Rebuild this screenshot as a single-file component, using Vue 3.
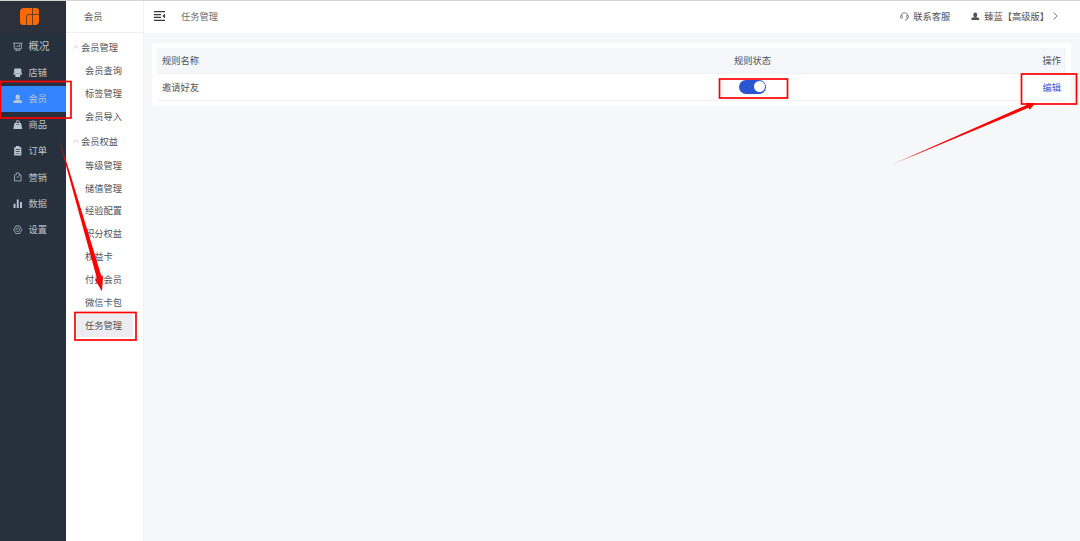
<template>
  <div class="layout">
    <!-- 主导航 -->
    <aside class="main-nav">
      <div class="logo">
        <svg viewBox="0 0 19 17" class="logo-icon">
          <path d="M4 0h12a3 3 0 0 1 3 3v10a4 4 0 0 1-4 4H3a3 3 0 0 1-3-3V4a4 4 0 0 1 4-4z" />
          <path d="M6.5 17V9A2.5 2.5 0 0 1 9 6.500h10M12.500 0v17" class="logo-line" />
        </svg>
      </div>
      <div
        v-for="item in mainMenus"
        :key="item.name"
        :class="['nav-item', { active: item.name === '会员', first: item.name === '概况' }]"
      >
        <svg viewBox="0 0 16 16" class="nav-icon">
          <path :d="item.icon" :class="item.line ? 'line' : 'fill'" fill-rule="evenodd" />
        </svg>
        <span>{{ item.name }}</span>
      </div>
    </aside>

    <!-- 二级菜单 -->
    <aside class="sub-nav">
      <div class="sub-title">会员</div>
      <div v-for="group in subMenus" :key="group.title" class="sub-group">
        <div class="group-title">
          <svg viewBox="0 0 6 4" class="group-arrow"><path d="M.4 3.5L3 .8l2.6 2.7" /></svg>
          <span>{{ group.title }}</span>
        </div>
        <div
          v-for="name in group.items"
          :key="name"
          :class="['sub-item', { active: name === current }]"
        >
          {{ name }}
        </div>
      </div>
    </aside>

    <div class="main">
      <header class="header">
        <svg viewBox="0 0 12 10" class="fold-icon">
          <path d="M0 .7h11M0 3.6h7M0 6.4h7M0 9.3h11" />
          <path d="M11 2.7v4.6L8.3 5z" class="fold-arrow" />
        </svg>
        <span class="page-name">{{ current }}</span>
        <div class="service">
          <svg viewBox="0 0 10 10" class="service-icon">
            <path d="M1.5 4.3a3.5 3.5 0 0 1 7 0M2.4 4H1.2a.7.7 0 0 0-.7.7v1.4a.7.7 0 0 0 .7.7h1.2zM7.6 4h1.2a.7.7 0 0 1 .7.7v1.4a.7.7 0 0 1-.7.7H7.6zM8.6 6.8q0 2-2.9 2.2" />
          </svg>
          <span>联系客服</span>
        </div>
        <div class="user">
          <svg viewBox="0 0 16 16" class="user-icon"><path :d="userIcon" /></svg>
          <span>臻蓝【高级版】</span>
          <svg viewBox="0 0 5 8" class="more-icon"><path d="M.7.6L4.2 4 .7 7.4" /></svg>
        </div>
      </header>

      <section class="card">
        <div class="table-row table-head">
          <span>规则名称</span>
          <span class="center">规则状态</span>
          <span class="right">操作</span>
        </div>
        <div v-for="rule in rules" :key="rule.name" class="table-row">
          <span>{{ rule.name }}</span>
          <span class="center">
            <button :class="['switch', { on: rule.enabled }]" @click="rule.enabled = !rule.enabled"></button>
          </span>
          <span class="right"><a class="edit">编辑</a></span>
        </div>
      </section>
    </div>

    <!-- 操作指引标注 -->
    <svg class="guide" viewBox="0 0 1080 541">
      <defs>
        <linearGradient id="fadeDown" gradientUnits="userSpaceOnUse" x1="58" y1="137" x2="66" y2="165">
          <stop offset="0" stop-color="#fe0000" stop-opacity="0.1" />
          <stop offset="1" stop-color="#fe0000" />
        </linearGradient>
        <linearGradient id="fadeRight" gradientUnits="userSpaceOnUse" x1="890" y1="165" x2="915" y2="155">
          <stop offset="0" stop-color="#fe0000" stop-opacity="0.4" />
          <stop offset="1" stop-color="#fe0000" />
        </linearGradient>
      </defs>
      <rect x="0.5" y="81.5" width="70.5" height="36.5" />
      <rect x="75" y="312.5" width="61" height="27.5" />
      <rect x="719.5" y="79" width="68" height="19" />
      <rect x="1021.5" y="74" width="55" height="30" />
      <path d="M58 137L66 160l35.500 116.500 1.500-.5-1 15.500-7-12 2-.8L65 162z" fill="url(#fadeDown)" />
      <path d="M891 165L1027 104.800l-1.300-2 9.500.4-5.500 6.600-1.200-2z" fill="url(#fadeRight)" />
    </svg>
  </div>
</template>

<script setup>
import { ref } from 'vue';

const current = '任务管理';

const userIcon = 'M8 1a3.6 3.6 0 0 1 3.6 3.6v1.600A3.6 3.6 0 0 1 4.4 6.200V4.600A3.6 3.6 0 0 1 8 1zM.5 15v-2Q.5 10.500 5.500 10h5Q15.500 10.500 15.500 13v2z';

// 主导航菜单
const mainMenus = [
  { name: '概况', line: true, icon: 'M0 2h16M2 2v9.5h12V2M5 8.5V7M8 8.5V5.5M11 8.5V4.5M5.5 11.5V15M10.5 11.5V15M4 15h8' },
  { name: '店铺', icon: 'M3.500 1h9A1.500 1.500 0 0 1 14 2.500V8h1v3.500h-3V15H4v-3.500H1V8h1V2.500A1.500 1.500 0 0 1 3.500 1zM3 9.500v.8h10v-.8z' },
  { name: '会员', icon: userIcon },
  { name: '商品', icon: 'M4.500 5V4a3.500 3.500 0 0 1 7 0v1h2L15.500 15H.5l2-10zM6 5h4V4a2 2 0 0 0-4 0zM5 7.500v1h6v-1z' },
  { name: '订单', icon: 'M5 0h6v2h3v14H2V2h3zM4.5 5v1.2h7V5zM4.5 8.3v1.2h7V8.3zM4.5 11.6v1.2h7v-1.2z' },
  { name: '营销', line: true, icon: 'M5 3.500L2.500 5v10h11V5L11 3.500M5.500 5V3.500a2.500 2.500 0 0 1 5 0V7M6 8.500h4' },
  { name: '数据', icon: 'M1 8h3.2v7H1zM6.4 1h3.2v14H6.4zM11.8 5H15v10h-3.2z' },
  { name: '设置', line: true, icon: 'M5 1.5h6L15 8l-4 6.5H5L1 8zM8 5a3 3 0 1 0 .01 0z' }
];

// 会员模块菜单
const subMenus = [
  { title: '会员管理', items: ['会员查询', '标签管理', '会员导入'] },
  {
    title: '会员权益',
    items: ['等级管理', '储值管理', '经验配置', '积分权益', '权益卡', '付费会员', '微信卡包', '任务管理']
  }
];

const rules = ref([{ name: '邀请好友', enabled: true }]);
</script>

<style>
body {
  margin: 0;
  overflow: hidden;
}
</style>

<style scoped>
.layout {
  position: relative;
  box-sizing: border-box;
  display: flex;
  width: 1080px;
  height: 541px;
  border-top: 1px solid #d2d3d5;
  background: #f6f7f9;
  color: #505256;
  font-family: "Noto Sans CJK SC", sans-serif;
  font-size: 9.25px;
  line-height: 14px;
}

.main-nav {
  width: 66px;
  flex-shrink: 0;
  background: #27313d;
}

.logo {
  box-sizing: border-box;
  height: 32.2px;
  display: flex;
  align-items: center;
  padding: 0 0 1px 20px;
  background: #2c303b;
}

.logo-icon {
  width: 19px;
  height: 17px;
  fill: #ff6a00;
}

.logo-line {
  fill: none;
  stroke: #5b3827;
  stroke-width: 0.9;
}

.nav-item {
  height: 26.18px;
  box-sizing: border-box;
  display: flex;
  align-items: center;
  padding: 0 0 1px 13px;
  gap: 6px;
  color: #bdc3cb;
}

.nav-item.first {
  font-size: 10.4px;
}

.nav-item.active {
  background: #3385ff;
}

.nav-icon {
  width: 9.5px;
  height: 9.5px;
  margin-top: 1px;
}

.nav-icon .fill {
  fill: #b9c5d0;
}

.nav-icon .line {
  fill: none;
  stroke: #aebac4;
  stroke-width: 1.4;
}

.sub-nav {
  box-sizing: border-box;
  width: 78px;
  flex-shrink: 0;
  background: #fff;
  border-right: 1px solid #f0f1f3;
}

.sub-title {
  height: 31px;
  line-height: 31px;
  padding-left: 18px;
  border-bottom: 1px solid #eeeff1;
}

.sub-group {
  padding-top: 2px;
}

.group-title {
  height: 24px;
  box-sizing: border-box;
  display: flex;
  align-items: center;
  padding: 0 0 1px 7px;
  gap: 2px;
}

.group-arrow {
  width: 6px;
  height: 4px;
  fill: none;
  stroke: #b4b6ba;
  stroke-width: 0.7;
}

.sub-item {
  height: 22.9px;
  line-height: 22.9px;
  margin: 0 10px 0 11px;
  padding-left: 8px;
}

.sub-item.active {
  background: #ecedf1;
}

.main {
  flex: 1;
}

.header {
  box-sizing: border-box;
  height: 32px;
  display: flex;
  align-items: center;
  padding: 0 22px 2px 10px;
  background: #fff;
}

.fold-icon {
  width: 12px;
  height: 10px;
  fill: none;
  stroke: #33363b;
  stroke-width: 1.2;
}

.fold-arrow {
  fill: #33363b;
  stroke: none;
}

.page-name {
  margin-left: 15px;
  color: #6b6d71;
}

.service,
.user {
  display: flex;
  align-items: center;
}

.service {
  margin-left: auto;
  gap: 4px;
}

.service-icon {
  width: 9px;
  height: 9px;
  fill: none;
  stroke: #6b6d71;
  stroke-width: 0.9;
}

.user {
  margin-left: 21px;
}

.user-icon {
  width: 8.5px;
  height: 8.5px;
  margin-right: 4.5px;
  fill: #505256;
}

.more-icon {
  width: 5px;
  height: 8px;
  margin-left: 4px;
  fill: none;
  stroke: #66686c;
  stroke-width: 0.9;
}

.card {
  margin: 10px 9px 0 8px;
  padding: 5px;
  background: #fff;
  border-radius: 2px;
}

.table-row {
  box-sizing: border-box;
  height: 27px;
  display: grid;
  grid-template-columns: 495.5px 190px 1fr;
  align-items: center;
  padding: 0 5px 1px;
  border-bottom: 1px solid #f0f1f5;
}

.table-head {
  height: 26px;
  background: #f5f6fa;
}

.center {
  display: flex;
  justify-content: center;
}

.right {
  text-align: right;
}

.switch {
  width: 27px;
  height: 14px;
  display: flex;
  align-items: center;
  padding: 0 1px;
  border: none;
  border-radius: 7px;
  background: #c4c7ce;
  cursor: pointer;
}

.switch::after {
  content: "";
  width: 11px;
  height: 11px;
  border-radius: 50%;
  background: #fff;
}

.switch.on {
  justify-content: flex-end;
  background: #2b55d0;
}

.edit {
  color: #3459d2;
  cursor: pointer;
}

.guide {
  position: absolute;
  top: -1px;
  left: 0;
  width: 1080px;
  height: 541px;
  pointer-events: none;
}

.guide rect {
  fill: none;
  stroke: #fe0000;
  stroke-width: 1.7;
}
</style>
